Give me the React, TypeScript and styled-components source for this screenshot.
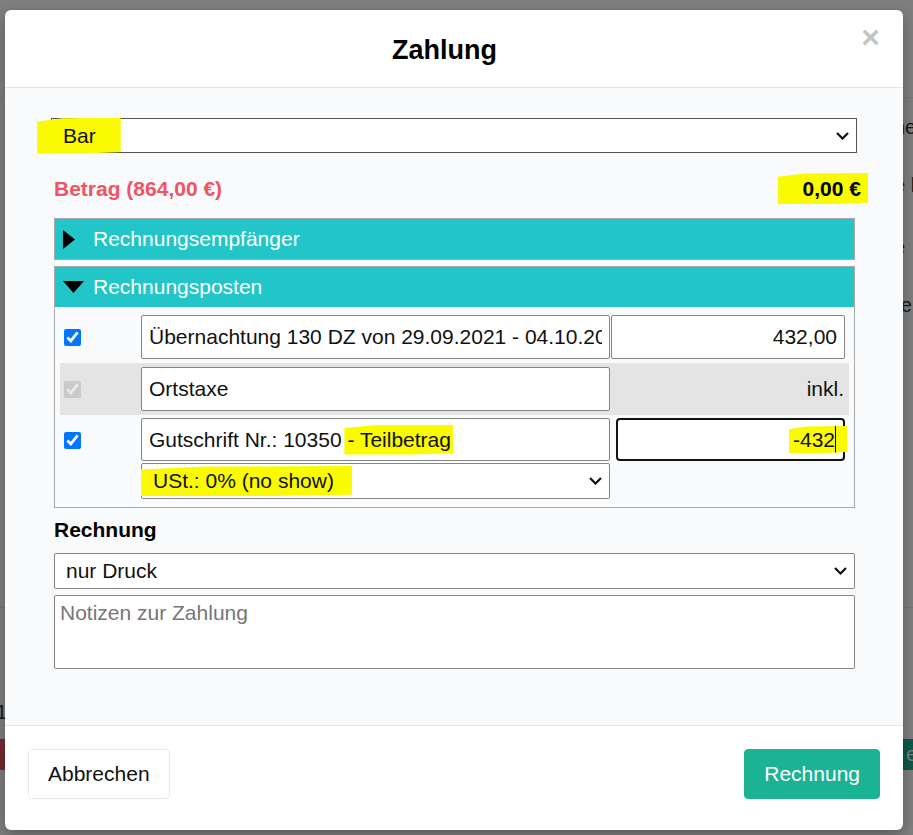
import React from 'react';
import styled, { createGlobalStyle } from 'styled-components';

const GlobalStyle = createGlobalStyle`
  html, body { margin: 0; padding: 0; }
  body {
    font-family: "Liberation Sans", Arial, Helvetica, sans-serif;
    color: #111;
    background: #fff;
  }
  *, *::before, *::after { box-sizing: border-box; }
`;

const Screen = styled.div`
  position: relative;
  width: 913px;
  height: 835px;
  overflow: hidden;
  background: #fff;
`;

/* the page that sits behind the modal, only its edges show */
const BgPage = styled.div`
  display: flex;
  flex-direction: column;
  font-size: 20px;
  color: #333;
`;

const BgRow = styled.div<{ $h: number; $line?: boolean }>`
  height: ${(p) => p.$h}px;
  display: flex;
  align-items: center;
  justify-content: space-between;
  border-bottom: ${(p) => (p.$line ? '1px solid #e7eaec' : '0')};
`;

const BgLead = styled.span`
  margin-left: -4px;
  white-space: nowrap;
`;

const BgTail = styled.span`
  width: 19px;
  white-space: nowrap;
`;

const BgButton = styled.span<{ $tone: 'red' | 'green' }>`
  height: 31px;
  width: 60px;
  display: flex;
  align-items: center;
  padding: 0 3px;
  color: #fff;
  background: ${(p) => (p.$tone === 'red' ? '#ed5565' : '#1ab394')};
  margin: ${(p) => (p.$tone === 'red' ? '0 0 0 -40px' : '0 -50px 0 0')};
`;

const Backdrop = styled.div`
  position: absolute;
  inset: 0;
  background: rgba(0, 0, 0, 0.5);
`;

/* modal */
const Dialog = styled.div`
  position: absolute;
  left: 5px;
  top: 10px;
  width: 898px;
  height: 820px;
  background: #fff;
  border-radius: 6px;
  box-shadow: 0 5px 15px rgba(0, 0, 0, 0.3);
  display: flex;
  flex-direction: column;
  overflow: hidden;
`;

const Header = styled.div`
  height: 78px;
  display: flex;
  align-items: center;
  padding: 0 23px;
  border-bottom: 1px solid #e5e5e5;
`;

const Title = styled.h4`
  flex: 1;
  margin: 0;
  padding-top: 4px;
  text-align: center;
  font-size: 27px;
  font-weight: 700;
  color: #000;
`;

const Close = styled.button`
  width: 19px;
  align-self: flex-start;
  margin-top: 11px;
  padding: 0;
  border: 0;
  background: none;
  font-family: inherit;
  font-size: 32px;
  font-weight: 700;
  line-height: 1;
  color: #c4c4c4;
`;

const Body = styled.div`
  flex: 1;
  background: #f8fafb;
  padding: 30px 48px 0 49px;
  display: flex;
  flex-direction: column;
  font-size: 21px;
`;

const SelectBox = styled.div<{ $h: number; $wide?: boolean }>`
  height: ${(p) => p.$h}px;
  margin: ${(p) => (p.$wide ? '0 -2px 0 -3px' : '0')};
  display: flex;
  align-items: center;
  justify-content: space-between;
  padding: 0 7px 0 11px;
  background: #fff;
  border: 1px solid ${(p) => (p.$wide ? '#555' : '#858585')};
  border-radius: ${(p) => (p.$wide ? '0' : '2px')};
  font-size: 21px;
  white-space: nowrap;
`;

const Mark = styled.span<{ $l: number; $r: number; $h: number }>`
  display: inline-flex;
  align-items: center;
  height: ${(p) => p.$h}px;
  margin: 0 ${(p) => -p.$r}px 0 ${(p) => -p.$l}px;
  padding: 0 ${(p) => p.$r}px 0 ${(p) => p.$l}px;
  background: #fafa00;
  clip-path: polygon(0 12%, 30% 2%, 100% 0, 100% 96%, 60% 100%, 0 100%);
`;

const SumRow = styled.div`
  margin-top: 19px;
  height: 31px;
  display: flex;
  align-items: center;
  justify-content: space-between;
  font-weight: 700;
  padding-top: 2px;
`;

const Amount = styled.span`
  color: #ed5565;
`;

const Total = styled.span`
  color: #000;
  margin-right: -6px;
`;

const Panel = styled.div<{ $gap: number }>`
  margin-top: ${(p) => p.$gap}px;
  border: 1px solid #a9a9a9;
  background: #f8fafb;
`;

const PanelHead = styled.div`
  height: 40px;
  display: flex;
  align-items: center;
  padding-left: 8px;
  background: #23c6c8;
  color: #fff;
  font-size: 21px;
`;

const Arrow = styled.span`
  width: 30px;
  display: flex;
  align-items: center;
`;

const PanelBody = styled.div`
  padding: 4px 5px;
`;

const ItemRow = styled.div<{ $muted?: boolean; $pt?: number }>`
  display: grid;
  grid-template-columns: 81px 469px 1fr;
  row-gap: 1px;
  padding: ${(p) => p.$pt ?? 4}px 0 4px;
  background: ${(p) => (p.$muted ? '#e4e4e4' : 'transparent')};
`;

const CheckCell = styled.div`
  height: 44px;
  display: flex;
  align-items: center;
  padding-left: 4px;
`;

const Check = styled.input`
  width: 17px;
  height: 17px;
  margin: 0;
  accent-color: #0075ff;
`;

const Field = styled.div<{ $h?: number; $right?: boolean }>`
  height: ${(p) => p.$h ?? 44}px;
  display: flex;
  align-items: center;
  padding: 0 7px 0 7px;
  background: #fff;
  border: 1px solid #858585;
  border-radius: 2px;
  justify-content: ${(p) => (p.$right ? 'flex-end' : 'flex-start')};
`;

const FieldText = styled.span`
  flex: 1;
  overflow: hidden;
  white-space: nowrap;
`;

const AmountCell = styled.div`
  padding: 0 4px 0 1px;
`;

const FocusField = styled.div`
  height: 43px;
  margin-left: 5px;
  display: flex;
  align-items: center;
  justify-content: flex-end;
  padding: 0 7px;
  background: #fff;
  border: 2px solid #111;
  border-radius: 4px;
`;

const Caret = styled.span`
  width: 1px;
  height: 27px;
  background: #000;
`;

const Incl = styled.div`
  height: 44px;
  display: flex;
  align-items: center;
  justify-content: flex-end;
  padding-right: 5px;
`;

const Label = styled.div`
  margin-top: 10px;
  line-height: 24px;
  font-weight: 700;
  color: #000;
`;

const Notes = styled.textarea`
  margin-top: 6px;
  height: 74px;
  padding: 5px 5px;
  resize: none;
  border: 1px solid #858585;
  border-radius: 2px;
  font-family: inherit;
  font-size: 21px;
  line-height: 24px;
  &::placeholder { color: #767676; }
`;

const Footer = styled.div`
  height: 105px;
  border-top: 1px solid #e5e5e5;
  padding: 23px 23px 0;
  display: flex;
  justify-content: space-between;
  align-items: flex-start;
`;

const Button = styled.button<{ $primary?: boolean }>`
  height: 50px;
  padding: 0 19px;
  border-radius: 4px;
  font-family: inherit;
  font-size: 21px;
  border: 1px solid ${(p) => (p.$primary ? '#1ab394' : '#e7eaec')};
  background: ${(p) => (p.$primary ? '#1ab394' : '#fff')};
  color: ${(p) => (p.$primary ? '#fff' : '#111')};
`;

const Chevron = () => (
  <svg width="13" height="8" viewBox="0 0 13 8">
    <path d="M1 1l5.5 5.5L12 1" stroke="#111" strokeWidth="2.2" fill="none" />
  </svg>
);

const App = () => {
  return (
    <Screen>
      <GlobalStyle />
      <BgPage>
        <BgRow $h={98} $line />
        <BgRow $h={58}>
          <span />
          <BgTail>ne</BgTail>
        </BgRow>
        <BgRow $h={58}>
          <span />
          <BgTail>e l</BgTail>
        </BgRow>
        <BgRow $h={66}>
          <span />
          <BgTail>e</BgTail>
        </BgRow>
        <BgRow $h={50}>
          <span />
          <BgTail>re</BgTail>
        </BgRow>
        <BgRow $h={278} $line />
        <BgRow $h={87} />
        <BgRow $h={35}>
          <BgLead>1</BgLead>
        </BgRow>
        <BgRow $h={48}>
          <BgButton $tone="red">ok</BgButton>
          <BgButton $tone="green">e</BgButton>
        </BgRow>
      </BgPage>
      <Backdrop />

      <Dialog>
        <Header>
          <Title>Zahlung</Title>
          <Close>×</Close>
        </Header>

        <Body>
          <SelectBox $h={35} $wide>
            <Mark $l={26} $r={25} $h={36}>Bar</Mark>
            <Chevron />
          </SelectBox>

          <SumRow>
            <Amount>Betrag (864,00 €)</Amount>
            <Total>
              <Mark $l={25} $r={7} $h={31}>0,00 €</Mark>
            </Total>
          </SumRow>

          <Panel $gap={15}>
            <PanelHead>
              <Arrow>
                <svg width="12" height="19" viewBox="0 0 12 19">
                  <polygon points="0,0 12,9.5 0,19" fill="#000" />
                </svg>
              </Arrow>
              Rechnungsempfänger
            </PanelHead>
          </Panel>

          <Panel $gap={6}>
            <PanelHead>
              <Arrow>
                <svg width="21" height="12" viewBox="0 0 21 12">
                  <polygon points="0,0 21,0 10.5,12" fill="#000" />
                </svg>
              </Arrow>
              Rechnungsposten
            </PanelHead>
            <PanelBody>
              <ItemRow>
                <CheckCell>
                  <Check type="checkbox" defaultChecked />
                </CheckCell>
                <Field>
                  <FieldText>Übernachtung 130 DZ von 29.09.2021 - 04.10.2021</FieldText>
                </Field>
                <AmountCell>
                  <Field $right>432,00</Field>
                </AmountCell>
              </ItemRow>

              <ItemRow $muted>
                <CheckCell>
                  <Check type="checkbox" defaultChecked disabled />
                </CheckCell>
                <Field>
                  <FieldText>Ortstaxe</FieldText>
                </Field>
                <Incl>inkl.</Incl>
              </ItemRow>

              <ItemRow $pt={3}>
                <CheckCell>
                  <Check type="checkbox" defaultChecked />
                </CheckCell>
                <Field $h={43}>
                  <FieldText>
                    Gutschrift Nr.: 10350{' '}
                    <Mark $l={3} $r={2} $h={30}>- Teilbetrag</Mark>
                  </FieldText>
                </Field>
                <AmountCell>
                  <FocusField>
                    <Mark $l={4} $r={11} $h={27}>
                      -432
                      <Caret />
                    </Mark>
                  </FocusField>
                </AmountCell>
                <span />
                <SelectBox $h={36}>
                  <Mark $l={12} $r={18} $h={30}>USt.: 0% (no show)</Mark>
                  <Chevron />
                </SelectBox>
                <span />
              </ItemRow>
            </PanelBody>
          </Panel>

          <Label>Rechnung</Label>
          <SelectBox $h={36} style={{ marginTop: 11 }}>
            nur Druck
            <Chevron />
          </SelectBox>
          <Notes placeholder="Notizen zur Zahlung" />
        </Body>

        <Footer>
          <Button>Abbrechen</Button>
          <Button $primary>Rechnung</Button>
        </Footer>
      </Dialog>
    </Screen>
  );
};

export default App;
